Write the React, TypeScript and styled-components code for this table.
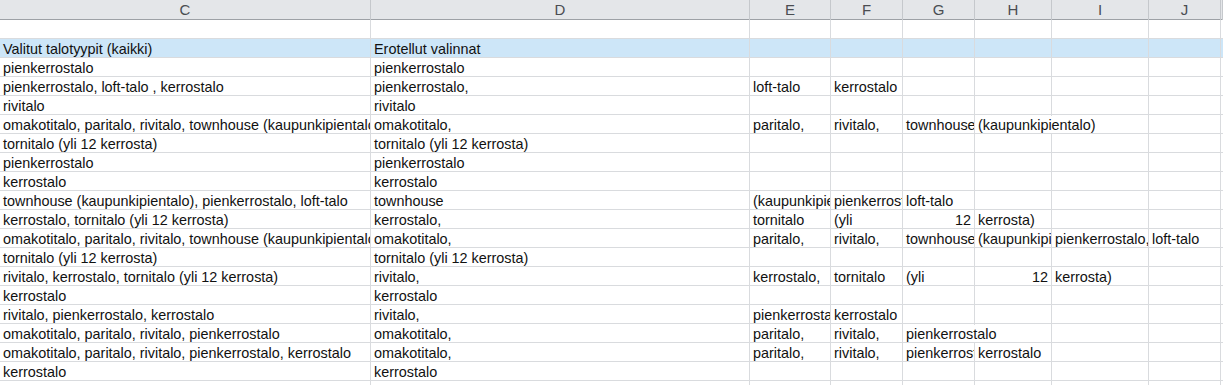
import styled, { createGlobalStyle } from 'styled-components';

// Style

const Global = createGlobalStyle`
    html, body {
        margin: 0;
        padding: 0;
        background: #ffffff;
    }
    body {
        font-family: "Liberation Sans", Arial, sans-serif;
        overflow: hidden;
    }
`

const COLS = '371px 379px 81px 72px 72px 77px 97px 72px 1fr';

const Sheet = styled.div`
    width: 1223px;
    height: 385px;
    overflow: hidden;
`

const HeaderRow = styled.div`
    display: grid;
    grid-template-columns: ${COLS};
    height: 20px;
    background: #e4e6e9;
    border-bottom: 1px solid #9da1a6;
    box-sizing: border-box;
`

const ColHead = styled.div`
    border-right: 1px solid #c5c8cc;
    color: #4a4d52;
    font-size: 15px;
    line-height: 20px;
    text-align: center;
`

const Row = styled.div<{ $blue?: boolean }>`
    display: grid;
    grid-template-columns: ${COLS};
    height: 19px;
    background: ${p => (p.$blue ? '#cde6f8' : '#ffffff')};
    border-bottom: 1px solid #d9dbde;
    box-sizing: border-box;
`

const Cell = styled.div<{ $span: number; $clip: boolean; $right?: boolean }>`
    grid-column: span ${p => p.$span};
    border-right: 1px solid #d9dbde;
    padding: 0 3px;
    font-size: 14.4px;
    line-height: 20px;
    color: #111111;
    white-space: nowrap;
    text-align: ${p => (p.$right ? 'right' : 'left')};
    overflow: ${p => (p.$clip ? 'hidden' : 'visible')};
    text-overflow: clip;
    position: relative;
    z-index: ${p => (p.$clip ? 0 : 1)};
`

// Data

type C = string | null | { t: string; span?: number; right?: boolean };

const letters = ['C', 'D', 'E', 'F', 'G', 'H', 'I', 'J', ''];

const rows: C[][] = [
    [],
    ['Valitut talotyypit (kaikki)', 'Erotellut valinnat'],
    ['pienkerrostalo', 'pienkerrostalo'],
    ['pienkerrostalo, loft-talo , kerrostalo', 'pienkerrostalo,', 'loft-talo', 'kerrostalo'],
    ['rivitalo', 'rivitalo'],
    ['omakotitalo, paritalo, rivitalo, townhouse (kaupunkipientalo)', 'omakotitalo,', 'paritalo,', 'rivitalo,', 'townhouse', { t: '(kaupunkipientalo)', span: 2 }],
    ['tornitalo (yli 12 kerrosta)', 'tornitalo (yli 12 kerrosta)'],
    ['pienkerrostalo', 'pienkerrostalo'],
    ['kerrostalo', 'kerrostalo'],
    ['townhouse (kaupunkipientalo), pienkerrostalo, loft-talo', 'townhouse', '(kaupunkipientalo)', 'pienkerrostalo', 'loft-talo'],
    ['kerrostalo, tornitalo (yli 12 kerrosta)', 'kerrostalo,', 'tornitalo', '(yli', { t: '12', right: true }, 'kerrosta)'],
    ['omakotitalo, paritalo, rivitalo, townhouse (kaupunkipientalo)', 'omakotitalo,', 'paritalo,', 'rivitalo,', 'townhouse', '(kaupunkipientalo)', 'pienkerrostalo,', 'loft-talo'],
    ['tornitalo (yli 12 kerrosta)', 'tornitalo (yli 12 kerrosta)'],
    ['rivitalo, kerrostalo, tornitalo (yli 12 kerrosta)', 'rivitalo,', 'kerrostalo,', 'tornitalo', '(yli', { t: '12', right: true }, 'kerrosta)'],
    ['kerrostalo', 'kerrostalo'],
    ['rivitalo, pienkerrostalo, kerrostalo', 'rivitalo,', 'pienkerrostalo', 'kerrostalo'],
    ['omakotitalo, paritalo, rivitalo, pienkerrostalo', 'omakotitalo,', 'paritalo,', 'rivitalo,', { t: 'pienkerrostalo', span: 2 }],
    ['omakotitalo, paritalo, rivitalo, pienkerrostalo, kerrostalo', 'omakotitalo,', 'paritalo,', 'rivitalo,', 'pienkerrostalo', 'kerrostalo'],
    ['kerrostalo', 'kerrostalo'],
    [],
];

// Turn a row of values into cells, honouring spans
const buildCells = (row: C[]) => {
    const out: { t: string; span: number; right?: boolean; clip: boolean }[] = [];
    let i = 0;
    while (i < 9) {
        const v = row[i] ?? null;
        const obj = typeof v === 'string' ? { t: v } : v ?? { t: '' };
        const span = ('span' in obj && obj.span) || 1;
        const next = row[i + span];
        out.push({ t: obj.t, span, right: 'right' in obj ? obj.right : false, clip: !!next || i + span >= 9 });
        i += span;
    }
    return out;
};

// Component

const App = () => {
    return (
        <Sheet>
            <Global />
            <HeaderRow>
                {letters.map((l, i) => <ColHead key={i}>{l}</ColHead>)}
            </HeaderRow>
            {rows.map((row, r) => (
                <Row key={r} $blue={r === 1}>
                    {buildCells(row).map((c, i) => (
                        <Cell key={i} $span={c.span} $clip={c.clip} $right={c.right}>{c.t}</Cell>
                    ))}
                </Row>
            ))}
        </Sheet>
    )
}
export default App;
